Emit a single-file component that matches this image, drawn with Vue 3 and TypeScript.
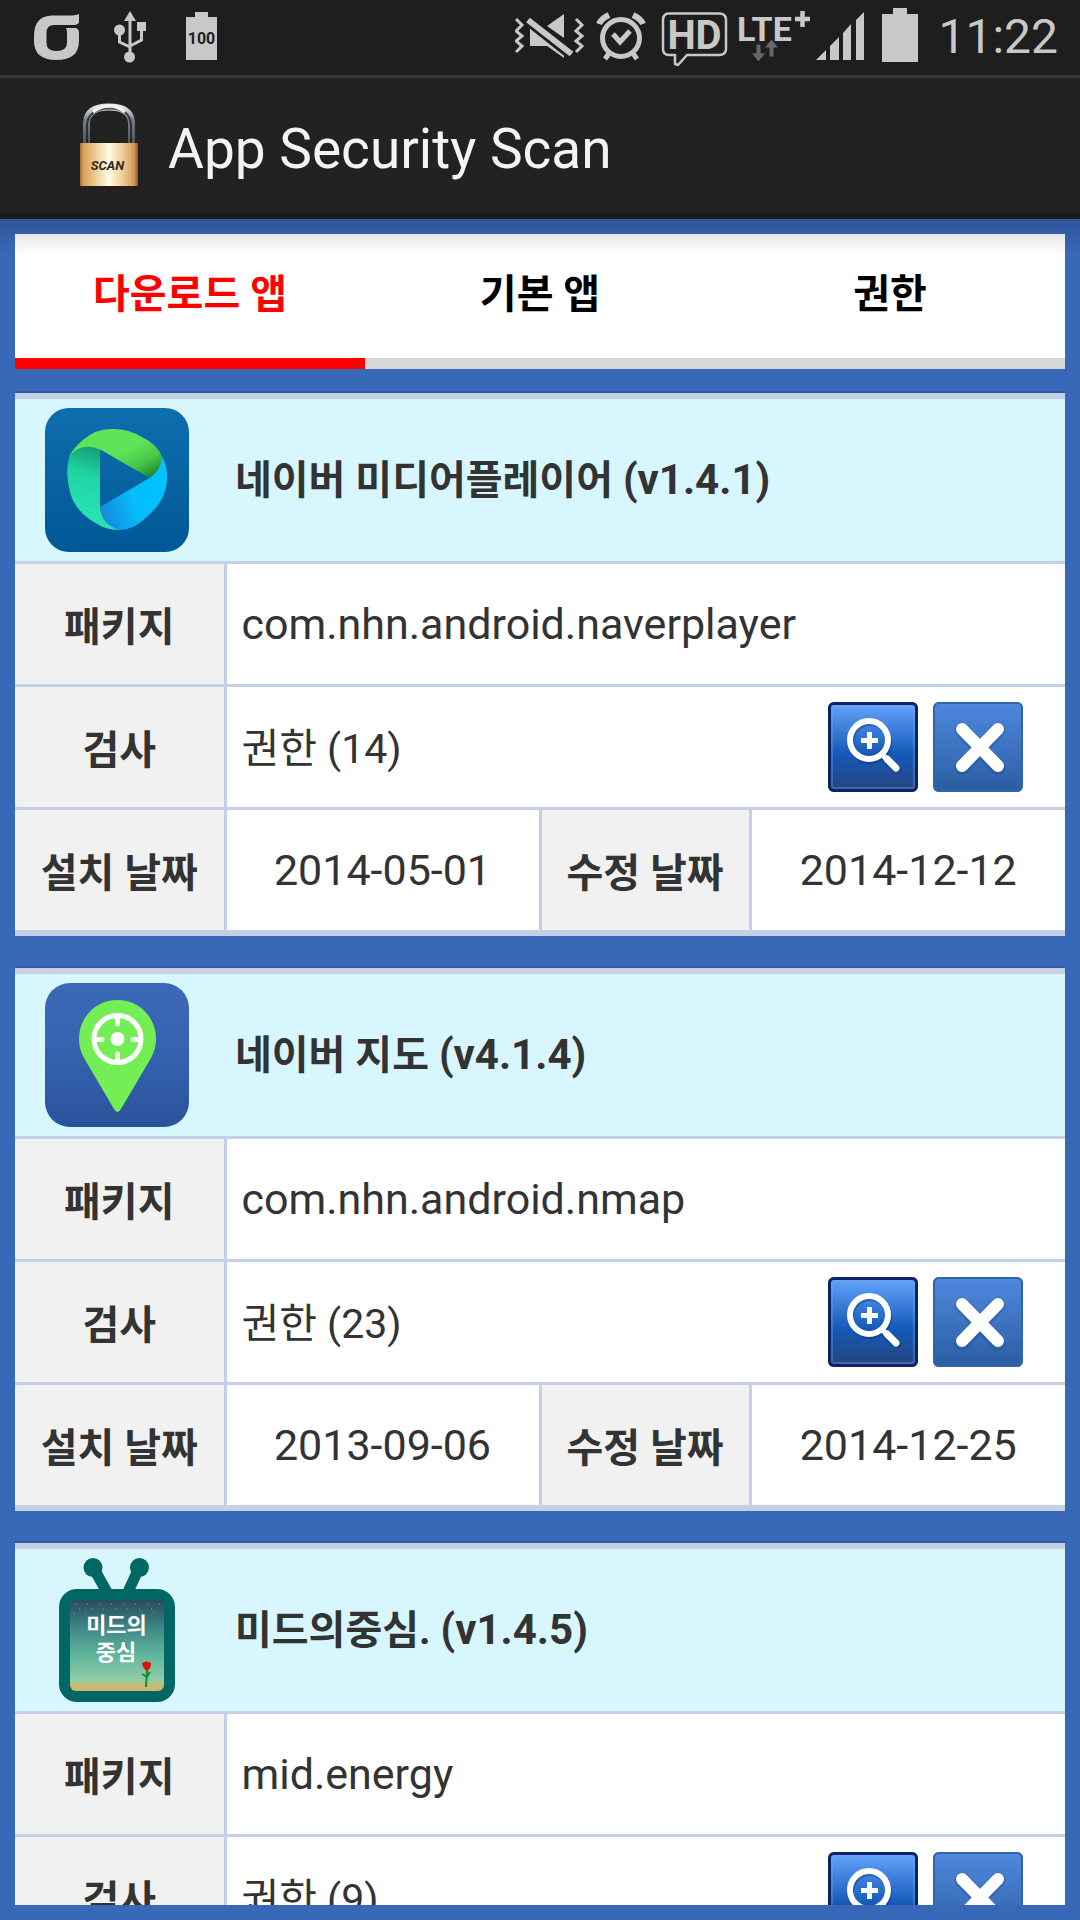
<script setup lang="ts">
import { ref } from 'vue'

interface AppEntry {
  id: 'player' | 'map' | 'tv'
  name: string
  version: string
  pkg: string
  permissions: number
  installed: string
  updated: string
}

const tabs: string[] = ['다운로드 앱', '기본 앱', '권한']
const activeTab = ref(0)

const apps: AppEntry[] = [
  { id: 'player', name: '네이버 미디어플레이어', version: '(v1.4.1)', pkg: 'com.nhn.android.naverplayer', permissions: 14, installed: '2014-05-01', updated: '2014-12-12' },
  { id: 'map', name: '네이버 지도', version: '(v4.1.4)', pkg: 'com.nhn.android.nmap', permissions: 23, installed: '2013-09-06', updated: '2014-12-25' },
  { id: 'tv', name: '미드의중심.', version: '(v1.4.5)', pkg: 'mid.energy', permissions: 9, installed: '2014-11-20', updated: '2014-12-20' },
]
</script>

<template>
  <div class="screen">
    <div class="status">
      <div class="group left">
        <svg width="45" height="75" viewBox="34 0 45 75" aria-hidden="true">
          <path fill="#c8c8c8" fill-rule="evenodd" d="M79 14V22Q79 24 75 25H54Q46.500 25 46.500 33V43Q46.500 51 56.500 51T67 43V33Q67 29 65.500 28H76Q79 29 79 33V41Q79 60 56.500 60T34 41V36Q34 16 52 15.500H68Q75 15.500 79 14Z" />
        </svg>
        <svg width="32" height="75" viewBox="114 0 32 75" aria-hidden="true">
          <g fill="none" stroke="#c8c8c8" stroke-width="3">
            <path d="M130 18V56M119.500 32V42L130 47M141.500 28V40L130 46" />
          </g>
          <path fill="#c8c8c8" d="M130 11L136 21H124ZM137 22H146V31H137Z" />
          <circle cx="119.500" cy="30" r="5.500" fill="#c8c8c8" />
          <circle cx="129.500" cy="57" r="5.500" fill="#c8c8c8" />
        </svg>
        <svg width="36" height="75" viewBox="181 0 36 75" role="img" aria-label="Battery 100">
          <path fill="#c8c8c8" d="M195 12H208V17H217V60H186V17H195Z" />
          <text x="201.500" y="44" text-anchor="middle" class="bold" font-size="16" fill="#1e1e1e">100</text>
        </svg>
      </div>
      <div class="group right">
        <svg width="73" height="75" viewBox="517 0 73 75" aria-hidden="true">
          <g fill="none" stroke="#c8c8c8" stroke-width="3">
            <path d="M518 19L524 25L518 31L524 36L518 41L524 46L518 52" />
            <path d="M578 19L584 25L578 31L584 36L578 41L584 46L578 52" />
          </g>
          <path fill="#c8c8c8" d="M532 28L566 52V58L549 46H532ZM566 14V38L549 26Z" />
          <path d="M528 23L572 58" stroke="#1e1e1e" stroke-width="4" />
          <path d="M530 20L573.500 54" stroke="#c8c8c8" stroke-width="6" />
        </svg>
        <svg width="57" height="75" viewBox="596 0 57 75" aria-hidden="true">
          <circle cx="623" cy="38" r="18.500" fill="none" stroke="#c8c8c8" stroke-width="5" />
          <path fill="none" stroke="#c8c8c8" stroke-width="5" d="M615 34L622 42L632 31M612 52L607 59M634 52L639 59" />
          <path fill="none" stroke="#c8c8c8" stroke-width="6" d="M601 24Q603 19 611 15M645 24Q643 19 635 15" />
        </svg>
        <svg width="74" height="75" viewBox="659 0 74 75" role="img" aria-label="HD">
          <path fill="none" stroke="#c8c8c8" stroke-width="2.500" stroke-linejoin="round" d="M671 13.500H721Q728 13.500 728 20V49Q728 55 721 55H689L680 65L677 64V55H671Q665 55 665 49V20Q665 13.500 671 13.500Z" />
          <text x="696.500" y="49" text-anchor="middle" class="bold" font-size="40" fill="#c8c8c8">HD</text>
        </svg>
        <svg width="73" height="75" viewBox="739 0 73 75" role="img" aria-label="LTE+">
          <text x="739" y="41" class="bold" font-size="34" fill="#c8c8c8">LTE</text>
          <path stroke="#c8c8c8" stroke-width="4.500" d="M797 19H812M804.500 11V27" />
          <path fill="#666" stroke="#1e1e1e" stroke-width="1" d="M758 44H763V53H768L760.500 62L753 53H758ZM771 57V48H766L773.500 39L781 48H776V57Z" />
        </svg>
        <svg width="54" height="75" viewBox="818 0 54 75" aria-hidden="true">
          <path fill="#c8c8c8" d="M818 60L828 50V60ZM832 60V46L841 37V60ZM845 60V33L853 24V60ZM858 60V20L866 12V60Z" />
        </svg>
        <svg width="52" height="75" viewBox="878 0 52 75" aria-hidden="true">
          <path fill="#c8c8c8" d="M895 8H909V14H920V62H884V14H895Z" />
        </svg>
        <time class="clock">11:22</time>
      </div>
    </div>

    <header class="titlebar">
      <svg width="96" height="96" viewBox="60 97 96 96" aria-hidden="true">
        <defs>
          <linearGradient id="brass" x1="0" x2="1" y1="0" y2="0">
            <stop offset="0" stop-color="#a86a28" />
            <stop offset="0.060" stop-color="#d6a05e" />
            <stop offset="0.200" stop-color="#e8bd7c" />
            <stop offset="0.500" stop-color="#fffce6" />
            <stop offset="0.750" stop-color="#eec992" />
            <stop offset="0.930" stop-color="#d39a58" />
            <stop offset="1" stop-color="#8c5520" />
          </linearGradient>
          <linearGradient id="steel" x1="0" x2="0" y1="0" y2="1">
            <stop offset="0" stop-color="#e6e6e6" />
            <stop offset="0.350" stop-color="#777c82" />
            <stop offset="1" stop-color="#4b5560" />
          </linearGradient>
        </defs>
        <ellipse cx="109" cy="186" rx="38" ry="3" fill="#2a1c18" />
        <path d="M86.500 143V122Q87 106 109 106T131.500 122V143" fill="none" stroke="url(#steel)" stroke-width="7" />
        <path d="M87 143V124Q88 108 109 107.500T131 124V143" fill="none" stroke="#10151b" stroke-width="2" opacity="0.700" />
        <path d="M93 111Q109 99 125 111" fill="none" stroke="#f2f2f2" stroke-width="3" />
        <rect x="80" y="142" width="58" height="43" rx="1" fill="url(#brass)" />
        <text x="107.500" y="169" text-anchor="middle" class="bold" font-style="italic" font-size="13" fill="#33291a">SCAN</text>
      </svg>
      <h1>App Security Scan</h1>
    </header>

    <main class="content">
      <nav class="tabs">
        <button v-for="(tab, i) in tabs" :key="tab" type="button" class="tab" :class="{ active: i === activeTab }" @click="activeTab = i">{{ tab }}</button>
      </nav>

      <div class="list">
        <article v-for="app in apps" :key="app.id" class="card">
          <div class="card-head">
            <svg v-if="app.id === 'player'" width="144" height="144" viewBox="0 0 144 144" aria-hidden="true">
              <defs>
                <linearGradient id="pbg" x1="0" x2="0" y1="0" y2="1">
                  <stop offset="0" stop-color="#0f6eae" />
                  <stop offset="1" stop-color="#005896" />
                </linearGradient>
                <linearGradient id="pgreen" x1="0.300" x2="1" y1="0.200" y2="0.900">
                  <stop offset="0.400" stop-color="#5fe356" />
                  <stop offset="0.700" stop-color="#46c748" />
                  <stop offset="1" stop-color="#168030" />
                </linearGradient>
                <linearGradient id="pteal" x1="0.500" x2="0.300" y1="0" y2="1">
                  <stop offset="0" stop-color="#149b74" />
                  <stop offset="0.350" stop-color="#21d3a3" />
                  <stop offset="1" stop-color="#27e8b6" />
                </linearGradient>
                <linearGradient id="pblue" x1="0" x2="1" y1="0.800" y2="0.400">
                  <stop offset="0" stop-color="#1a84dd" />
                  <stop offset="0.500" stop-color="#04bdfa" />
                  <stop offset="1" stop-color="#00c3ff" />
                </linearGradient>
              </defs>
              <rect width="144" height="144" rx="24" fill="url(#pbg)" />
              <path fill="url(#pblue)" d="M104.500 70Q115 60 116.500 48Q121 55 122 65Q123 82 115 94Q108 105 93 116Q84 122 74 122Q55 119 55 99Z" />
              <path fill="url(#pteal)" d="M55 42V99Q56 116 74 122Q60 122 49 114Q30 103 25 84Q20 66 24 50Q28 36 43 38Q50 38 55 42Z" />
              <path fill="url(#pgreen)" d="M24 49Q29 39 38 32Q50 21 66 21Q82 20 97 29Q113 37 116.500 48Q118 60 104.500 70L58 43Q36 32 24 49Z" />
            </svg>
            <svg v-else-if="app.id === 'map'" width="144" height="144" viewBox="0 0 144 144" aria-hidden="true">
              <defs>
                <linearGradient id="mbg" x1="0" x2="0" y1="0" y2="1">
                  <stop offset="0" stop-color="#3b69b8" />
                  <stop offset="0.400" stop-color="#3764b2" />
                  <stop offset="1" stop-color="#2b539b" />
                </linearGradient>
              </defs>
              <rect width="144" height="144" rx="25" fill="url(#mbg)" />
              <path fill="#74ee55" d="M72.500 17C95 17 111 35 111 56Q111 66 106 75L76 126Q72.500 132 69 126L39 75Q34 66 34 56C34 35 50 17 72.500 17Z" />
              <g fill="none" stroke="#fff" stroke-width="5">
                <circle cx="72.500" cy="56" r="23.500" />
                <path stroke-linecap="round" d="M72.500 34V41M72.500 71V78M50 56.500H57M88 56.500H95" />
              </g>
              <circle cx="72.500" cy="56" r="7" fill="#fff" />
            </svg>
            <svg v-else width="144" height="144" viewBox="0 0 144 144" aria-hidden="true">
              <defs>
                <linearGradient id="sky" x1="0" x2="0" y1="0" y2="1">
                  <stop offset="0" stop-color="#2b4a5c" />
                  <stop offset="0.250" stop-color="#397e80" />
                  <stop offset="0.600" stop-color="#5fb49b" />
                  <stop offset="0.900" stop-color="#93cfa8" />
                  <stop offset="0.920" stop-color="#c6bb72" />
                  <stop offset="1" stop-color="#c9b870" />
                </linearGradient>
              </defs>
              <g fill="#006765">
                <circle cx="48" cy="9.500" r="9.500" />
                <circle cx="94.500" cy="9.500" r="9.500" />
                <rect x="14" y="31" width="116" height="113" rx="18" />
              </g>
              <path stroke="#006765" stroke-width="11" d="M48 9L63 36M94.500 9L82 36" />
              <rect x="25" y="42" width="94" height="91" rx="6" fill="url(#sky)" />
              <path stroke="#b9d2d2" stroke-width="1" stroke-dasharray="1 11" opacity="0.600" d="M30 46H116M34 51H114M28 55H48M96 54H116" />
              <text x="71.500" y="75" text-anchor="middle" class="bold" font-size="22" fill="#fff">미드의</text>
              <text x="71" y="102" text-anchor="middle" class="bold" font-size="22" fill="#fff">중심</text>
              <path fill="none" stroke="#1c8a2c" stroke-width="2" d="M102 112L101 129M97 116L102 119L105 114" />
              <path fill="#e01010" d="M97 105Q101 102 106 105Q106 111 102 113Q98 111 97 105Z" />
            </svg>
            <h2>{{ app.name }} <span class="version">{{ app.version }}</span></h2>
          </div>
          <table>
            <colgroup>
              <col class="label-col" />
              <col class="value-col" />
              <col class="label-col" />
              <col class="value-col" />
            </colgroup>
            <tbody>
              <tr>
                <th scope="row">패키지</th>
                <td colspan="3">{{ app.pkg }}</td>
              </tr>
              <tr>
                <th scope="row">검사</th>
                <td colspan="3">
                  <div class="scan">
                    <span class="count">권한 ({{ app.permissions }})</span>
                    <div class="actions">
                      <button type="button" class="icon-btn inspect" aria-label="권한 보기">
                        <svg width="90" height="90" viewBox="0 0 90 90" aria-hidden="true">
                          <g fill="none" stroke="#0b2f6e" opacity="0.400">
                            <circle cx="42" cy="40" r="19" stroke-width="6" />
                            <path stroke-width="8" stroke-linecap="round" d="M57 57L69 67" />
                          </g>
                          <g fill="none" stroke="#fff">
                            <circle cx="41" cy="38" r="19" stroke-width="6" />
                            <path stroke-width="5" d="M33 38.500H50M41.500 30V47" />
                            <path stroke-width="5" d="M54 52L60 59" />
                            <path stroke-width="7" stroke-linecap="round" d="M59 57L68 66" />
                          </g>
                        </svg>
                      </button>
                      <button type="button" class="icon-btn remove" aria-label="삭제">
                        <svg width="90" height="90" viewBox="0 0 90 90" aria-hidden="true">
                          <path fill="none" stroke="#1f4c8d" stroke-width="15" stroke-linecap="round" opacity="0.350" d="M29 28L65 66M65 28L29 66" />
                          <path fill="none" stroke="#fff" stroke-width="12" stroke-linecap="round" d="M29 27L65 64M65 27L29 64" />
                        </svg>
                      </button>
                    </div>
                  </div>
                </td>
              </tr>
              <tr>
                <th scope="row">설치 날짜</th>
                <td class="date">{{ app.installed }}</td>
                <th scope="row">수정 날짜</th>
                <td class="date">{{ app.updated }}</td>
              </tr>
            </tbody>
          </table>
        </article>
      </div>
    </main>
  </div>
</template>

<style>
body {
  margin: 0;
  background: #3868b8;
}
</style>

<style scoped>
.screen {
  display: flex;
  flex-direction: column;
  height: 100vh;
  overflow: hidden;
  background: #3868b8;
  color: #333;
  font-family: Roboto, 'Noto Sans CJK KR', sans-serif;
  font-size: 43px;
}

.bold {
  font-weight: 700;
}

.status {
  display: flex;
  flex: none;
  justify-content: space-between;
  height: 75px;
  padding: 0 22px 0 34px;
  background: #1e1e1e;
  border-bottom: 3px solid #3a3a3a;
}

.group {
  display: flex;
}

.left {
  gap: 35px;
}

.right {
  gap: 6px;
}

.clock {
  padding-left: 4px;
  color: #c8c8c8;
  font-size: 48px;
  font-weight: 400;
  line-height: 74px;
}

.titlebar {
  display: flex;
  flex: none;
  align-items: center;
  gap: 12px;
  height: 135px;
  padding-left: 60px;
  background: #222;
  border-bottom: 6px solid #1b1b1b;
}

h1 {
  margin: 0;
  padding-top: 6px;
  color: #f3f3f3;
  font-size: 55px;
  font-weight: 400;
}

.content {
  position: relative;
  display: flex;
  flex: 1;
  flex-direction: column;
  min-height: 0;
  padding: 15px;
}

/* shadow cast by the title bar */
.content::before {
  content: '';
  position: absolute;
  inset: 0 0 auto;
  height: 36px;
  background: linear-gradient(rgba(0, 0, 0, 0.160), rgba(0, 0, 0, 0));
  pointer-events: none;
}

.tabs {
  display: flex;
  flex: none;
}

.tab {
  flex: 1;
  height: 135px;
  padding: 0 0 10px;
  border: 0;
  border-bottom: 11px solid #d7d7d7;
  background: #fff;
  color: #000;
  font: inherit;
  font-size: 40px;
  font-weight: 700;
}

.tab.active {
  border-color: #f00;
  color: #f00;
}

.list {
  display: flex;
  flex: 1;
  flex-direction: column;
  gap: 32px;
  min-height: 0;
  padding-top: 24px;
  overflow-y: auto;
  scrollbar-width: none;
}

.card {
  flex: none;
  border-top: 6px solid #c5cfe6;
  border-bottom: 6px solid #c5cfe6;
  background: #fff;
  box-shadow: 0 -2px #3059a6;
}

.card-head {
  display: flex;
  align-items: center;
  gap: 46px;
  height: 162px;
  padding-left: 30px;
  background: #d7f6fe;
  border-bottom: 3px solid #c5cfe6;
}

h2 {
  margin: 0;
  padding-bottom: 6px;
  font-size: 40px;
  font-weight: 700;
}

.version {
  font-size: 42px;
}

table {
  width: 100%;
  border-collapse: collapse;
  table-layout: fixed;
}

.label-col {
  width: 20%;
}

.value-col {
  width: 30%;
}

th,
td {
  height: 120px;
  padding: 0;
}

th {
  background: #f1f1f1;
  font-size: 40px;
  font-weight: 700;
}

td {
  padding-left: 15px;
}

td.date {
  padding-left: 0;
  text-align: center;
}

tr + tr > * {
  border-top: 3px solid #c5cfe6;
}

tr > * + * {
  border-left: 3px solid #c5cfe6;
}

.scan {
  display: flex;
  align-items: center;
  justify-content: space-between;
  padding-right: 42px;
}

.count {
  padding-bottom: 4px;
  font-size: 41px;
}

.actions {
  display: flex;
  gap: 15px;
}

.icon-btn {
  box-sizing: border-box;
  width: 90px;
  height: 90px;
  padding: 0;
  border: 0;
  border-radius: 6px;
}

.icon-btn svg {
  display: block;
}

.inspect {
  background: linear-gradient(#66a6ff, #1459b8 58%, #27447a);
  box-shadow: inset 0 0 0 3px #0c2463, inset 0 0 0 5px rgba(120, 165, 235, 0.350);
}

.remove {
  background: linear-gradient(#5089df, #2a5da2);
  box-shadow: inset 0 0 0 2px #2f66a8;
}
</style>
